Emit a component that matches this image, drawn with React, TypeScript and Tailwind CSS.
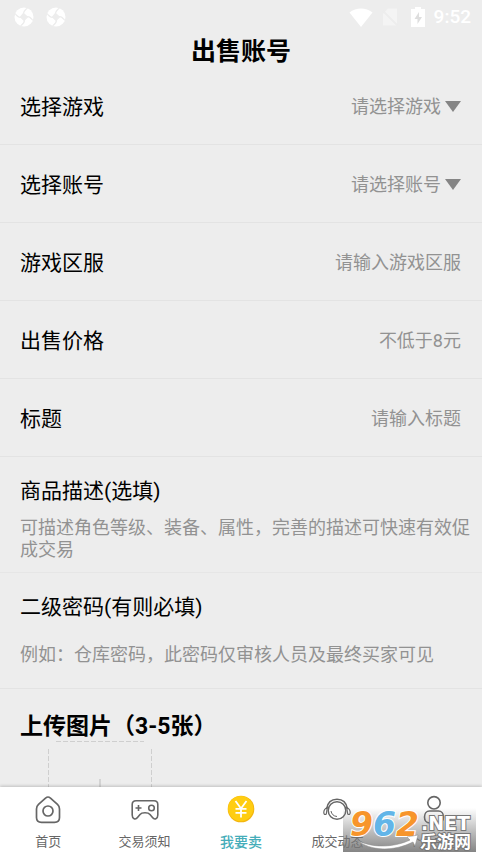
import type { ReactNode } from 'react';

const FIELDS = [
  { id: 'region', label: '游戏区服', placeholder: '请输入游戏区服' },
  { id: 'price', label: '出售价格', placeholder: '不低于8元' },
  { id: 'title', label: '标题', placeholder: '请输入标题' },
];

const SELECTS = [
  { id: 'game', label: '选择游戏', placeholder: '请选择游戏' },
  { id: 'account', label: '选择账号', placeholder: '请选择账号' },
];

function Row({ id, label, children }: { id: string; label: string; children: ReactNode }) {
  return (
    <div className="flex h-[78px] items-center border-b border-[#e3e3e3] pt-0.5 pr-[21px] pl-5">
      <label htmlFor={id} className="shrink-0 text-[21px] leading-7 text-black">
        {label}
      </label>
      {children}
    </div>
  );
}

function PinwheelIcon() {
  return (
    <svg width="20" height="20" viewBox="0 0 20 20">
      <circle cx="10" cy="10" r="9.5" fill="#fff" />
      <path
        d="M13.5 1C10.500 3 9.500 4.500 9.500 6.500L13.500 10L10 13.500L6.500 10L9.500 6.500M19 13.500C17 10.500 15.500 9.500 13.500 9.500M6.500 19C9.500 17 10.500 15.500 10.500 13.500M1 6.500C3 9.500 4.500 10.500 6.500 10.500"
        fill="#ededed"
        stroke="#ededed"
        strokeWidth="1.2"
      />
    </svg>
  );
}

function StatusBar() {
  return (
    <div className="flex h-[34px] shrink-0 items-center justify-between pl-[14px] pr-[11px]">
      <div className="flex items-center gap-3">
        <PinwheelIcon />
        <PinwheelIcon />
      </div>
      <div className="flex items-center">
        <svg width="24" height="19" viewBox="0 0 24 19">
          <path d="M12 19 .5 4.500C7-.8 17-.8 23.500 4.500Z" fill="#fff" />
        </svg>
        <svg className="ml-2" width="18" height="20" viewBox="0 0 18 20">
          <path d="M7 1.500H16V18.500H2V7Z" fill="#f4f4f4" />
          <path d="M1 3 17 19" stroke="#ededed" strokeWidth="2" />
        </svg>
        <svg className="ml-3" width="14" height="20" viewBox="0 0 14 20">
          <path d="M4 0H10V2H14V20H0V2H4Z" fill="#fff" />
          <path d="M8 5 3.500 12H6.500V17L11 10H8Z" fill="#dedede" />
        </svg>
        <span className="ml-[9px] text-[19px] leading-6 font-medium text-white">9:52</span>
      </div>
    </div>
  );
}

function HomeIcon() {
  return (
    <svg width="28" height="30" viewBox="0 0 28 30" fill="none" stroke="#666" strokeWidth="1.700">
      <path d="M11.800 3C13 1.800 15 1.800 16.200 3L23.500 9.300C25 10.600 25.500 12 25.500 14V22.500C25.500 25.800 23.500 27.300 20.500 27.300H7.500C4.500 27.300 2.500 25.800 2.500 22.500V14C2.500 12 3 10.600 4.500 9.300Z" />
      <circle cx="14" cy="16" r="5" />
    </svg>
  );
}

function GamepadIcon() {
  return (
    <svg width="28" height="30" viewBox="0 0 28 30" fill="none" stroke="#666" strokeWidth="1.600">
      <path d="M5 5.800H23C25.500 5.800 26.800 7.300 26.800 9.500V20C26.800 24 23.500 25.200 21.500 22.500L19 19.500C17.800 18 16.500 17.800 14 17.800S10.200 18 9 19.500L6.500 22.500C4.500 25.200 1.200 24 1.200 20V9.500C1.200 7.300 2.500 5.800 5 5.800Z" />
      <path d="M7.500 10V16M4.500 13H10.500" />
      <circle cx="20.500" cy="13" r="2.800" />
    </svg>
  );
}

function CoinIcon() {
  return (
    <svg width="28" height="30" viewBox="0 0 28 30" fill="none">
      <circle cx="14" cy="14" r="13.300" fill="#f3b50f" />
      <circle cx="13.700" cy="13.600" r="12.600" fill="#ffcd12" />
      <path d="M8.500 6 14 13.500 19.500 6M14 13.500V22.500M8.500 13.800H19.500M8.500 17.800H19.500" stroke="#fff" strokeWidth="1.800" />
    </svg>
  );
}

function HeadsetIcon() {
  return (
    <svg width="28" height="30" viewBox="0 0 28 30" fill="none" stroke="#666" strokeWidth="1.500">
      <circle cx="14" cy="15.500" r="8.800" />
      <path d="M3.500 14C4.500 8 8.500 4.300 14 4.300S23.500 8 24.500 14" />
      <path d="M4.300 12.500C2 13.500 .8 15.500 .8 17.500S2 20 3.300 19ZM23.700 12.500C26 13.500 27.200 15.500 27.200 17.500S26 20 24.700 19Z" strokeWidth="1.200" />
      <path d="M8 16C8.500 19 10.500 21.300 14 21.500" strokeWidth="1" />
    </svg>
  );
}

function PersonIcon() {
  return (
    <svg width="28" height="30" viewBox="0 0 28 30" fill="none" stroke="#666" strokeWidth="1.600">
      <circle cx="14" cy="7.800" r="6.200" />
      <path d="M9.500 16H18.500C21.500 16 23.500 18.500 23.500 22C23.500 25.500 21.500 28 18.500 28H9.500C6.500 28 4.500 25.500 4.500 22C4.500 18.500 6.500 16 9.500 16Z" />
    </svg>
  );
}

const TABS = [
  { label: '首页', icon: <HomeIcon /> },
  { label: '交易须知', icon: <GamepadIcon /> },
  { label: '我要卖', icon: <CoinIcon />, active: true },
  { label: '成交动态', icon: <HeadsetIcon /> },
  { label: '个人中心', icon: <PersonIcon /> },
];

function Watermark() {
  return (
    <svg className="pointer-events-none absolute right-0 bottom-0" width="139" height="60" viewBox="0 0 139 60">
      <defs>
        <linearGradient id="wm-bg" x1="0" y1="0" x2="0" y2="1">
          <stop offset="0" stopColor="#777" stopOpacity="0" />
          <stop offset="1" stopColor="#777" stopOpacity="0.9" />
        </linearGradient>
      </defs>
      <rect y="10" width="133" height="44" fill="url(#wm-bg)" />
      <g
        fontFamily="'DejaVu Sans', sans-serif"
        fontWeight="700"
        fontStyle="italic"
        fontSize="33"
        stroke="#fff"
        strokeWidth="2"
        paintOrder="stroke"
      >
        <text x="7" y="38" fill="#f7952b">9</text>
        <text x="30" y="38" fill="#62b5e8">6</text>
        <text x="53" y="38" fill="#f7952b">2</text>
      </g>
      <path d="M14 42C28 50 50 50 67 42L64 39 75 37 72 48 70 44C50 54 27 53 14 42Z" fill="#fff" stroke="#888" strokeWidth="0.500" />
      <g fill="#fff" stroke="#777" strokeWidth="2" paintOrder="stroke" fontWeight="700">
        <text x="78" y="32" fontSize="19" fontFamily="'DejaVu Sans', sans-serif">.NET</text>
        <text x="77" y="50" fontSize="17" fontFamily="'Noto Sans CJK SC', sans-serif">乐游网</text>
      </g>
    </svg>
  );
}

function TabBar() {
  return (
    <nav className="relative h-[71px] shrink-0 bg-white shadow-[0_-1px_3px_rgba(0,0,0,0.2)]">
      <div className="grid h-full grid-cols-5">
        {TABS.map((tab) => (
          <button key={tab.label} type="button" className="flex flex-col items-center gap-[7px] pt-2">
            {tab.icon}
            <span className={tab.active ? 'text-sm leading-5 font-medium text-[#45adb9]' : 'text-[13px] leading-5 text-[#666]'}>
              {tab.label}
            </span>
          </button>
        ))}
      </div>
      <Watermark />
    </nav>
  );
}

export default function App() {
  return (
    <div className="flex h-screen flex-col bg-[#ededed] font-[Roboto,'Noto_Sans_CJK_SC',sans-serif]">
      <StatusBar />
      <h1 className="h-[33px] shrink-0 text-center text-[25px] leading-9 font-bold text-black">出售账号</h1>

      <main className="min-h-0 flex-1 overflow-y-auto [scrollbar-width:none]">
        {SELECTS.map((field) => (
          <Row key={field.id} id={field.id} label={field.label}>
            <div className="flex flex-1 items-center justify-end gap-1">
              <select id={field.id} className="appearance-none bg-transparent text-right text-lg text-[#929292] outline-none">
                <option>{field.placeholder}</option>
              </select>
              <svg width="16" height="11" viewBox="0 0 16 11">
                <path d="M0 0H16L8 11Z" fill="#858585" />
              </svg>
            </div>
          </Row>
        ))}
        {FIELDS.map((field) => (
          <Row key={field.id} id={field.id} label={field.label}>
            <input
              id={field.id}
              placeholder={field.placeholder}
              className="min-w-0 flex-1 bg-transparent text-right text-lg text-black outline-none placeholder:text-[#929292]"
            />
          </Row>
        ))}

        <div className="flex h-[116px] flex-col border-b border-[#e6e6e6] pt-5 pr-2 pl-5">
          <label htmlFor="description" className="text-[21px] leading-7 text-black">
            商品描述(选填)
          </label>
          <textarea
            id="description"
            rows={2}
            placeholder="可描述角色等级、装备、属性，完善的描述可快速有效促成交易"
            className="mt-3 resize-none overflow-hidden bg-transparent text-lg leading-[22px] text-black outline-none placeholder:text-[#929292]"
          />
        </div>

        <div className="flex h-[116px] flex-col border-b border-[#e3e3e3] px-5 pt-5">
          <label htmlFor="password" className="text-[21px] leading-7 text-black">
            二级密码(有则必填)
          </label>
          <input
            id="password"
            placeholder="例如：仓库密码，此密码仅审核人员及最终买家可见"
            className="mt-5 bg-transparent text-lg text-black outline-none placeholder:text-[#929292]"
          />
        </div>

        <section className="px-5 pt-6">
          <h2 className="text-[23px] leading-7 font-bold text-black">上传图片（3-5张）</h2>
          <button type="button" aria-label="上传图片" className="ml-7 block">
            <svg width="104" height="104" viewBox="0 0 104 104" fill="none" stroke="#cfcfcf">
              <path d="M8 .5H96M8 103.500H96M.5 8V96M103.500 8V96" strokeDasharray="5 2" />
              <path d="M52 38V66M38 52H66" stroke="#bbb" />
            </svg>
          </button>
        </section>
      </main>

      <TabBar />
    </div>
  );
}
